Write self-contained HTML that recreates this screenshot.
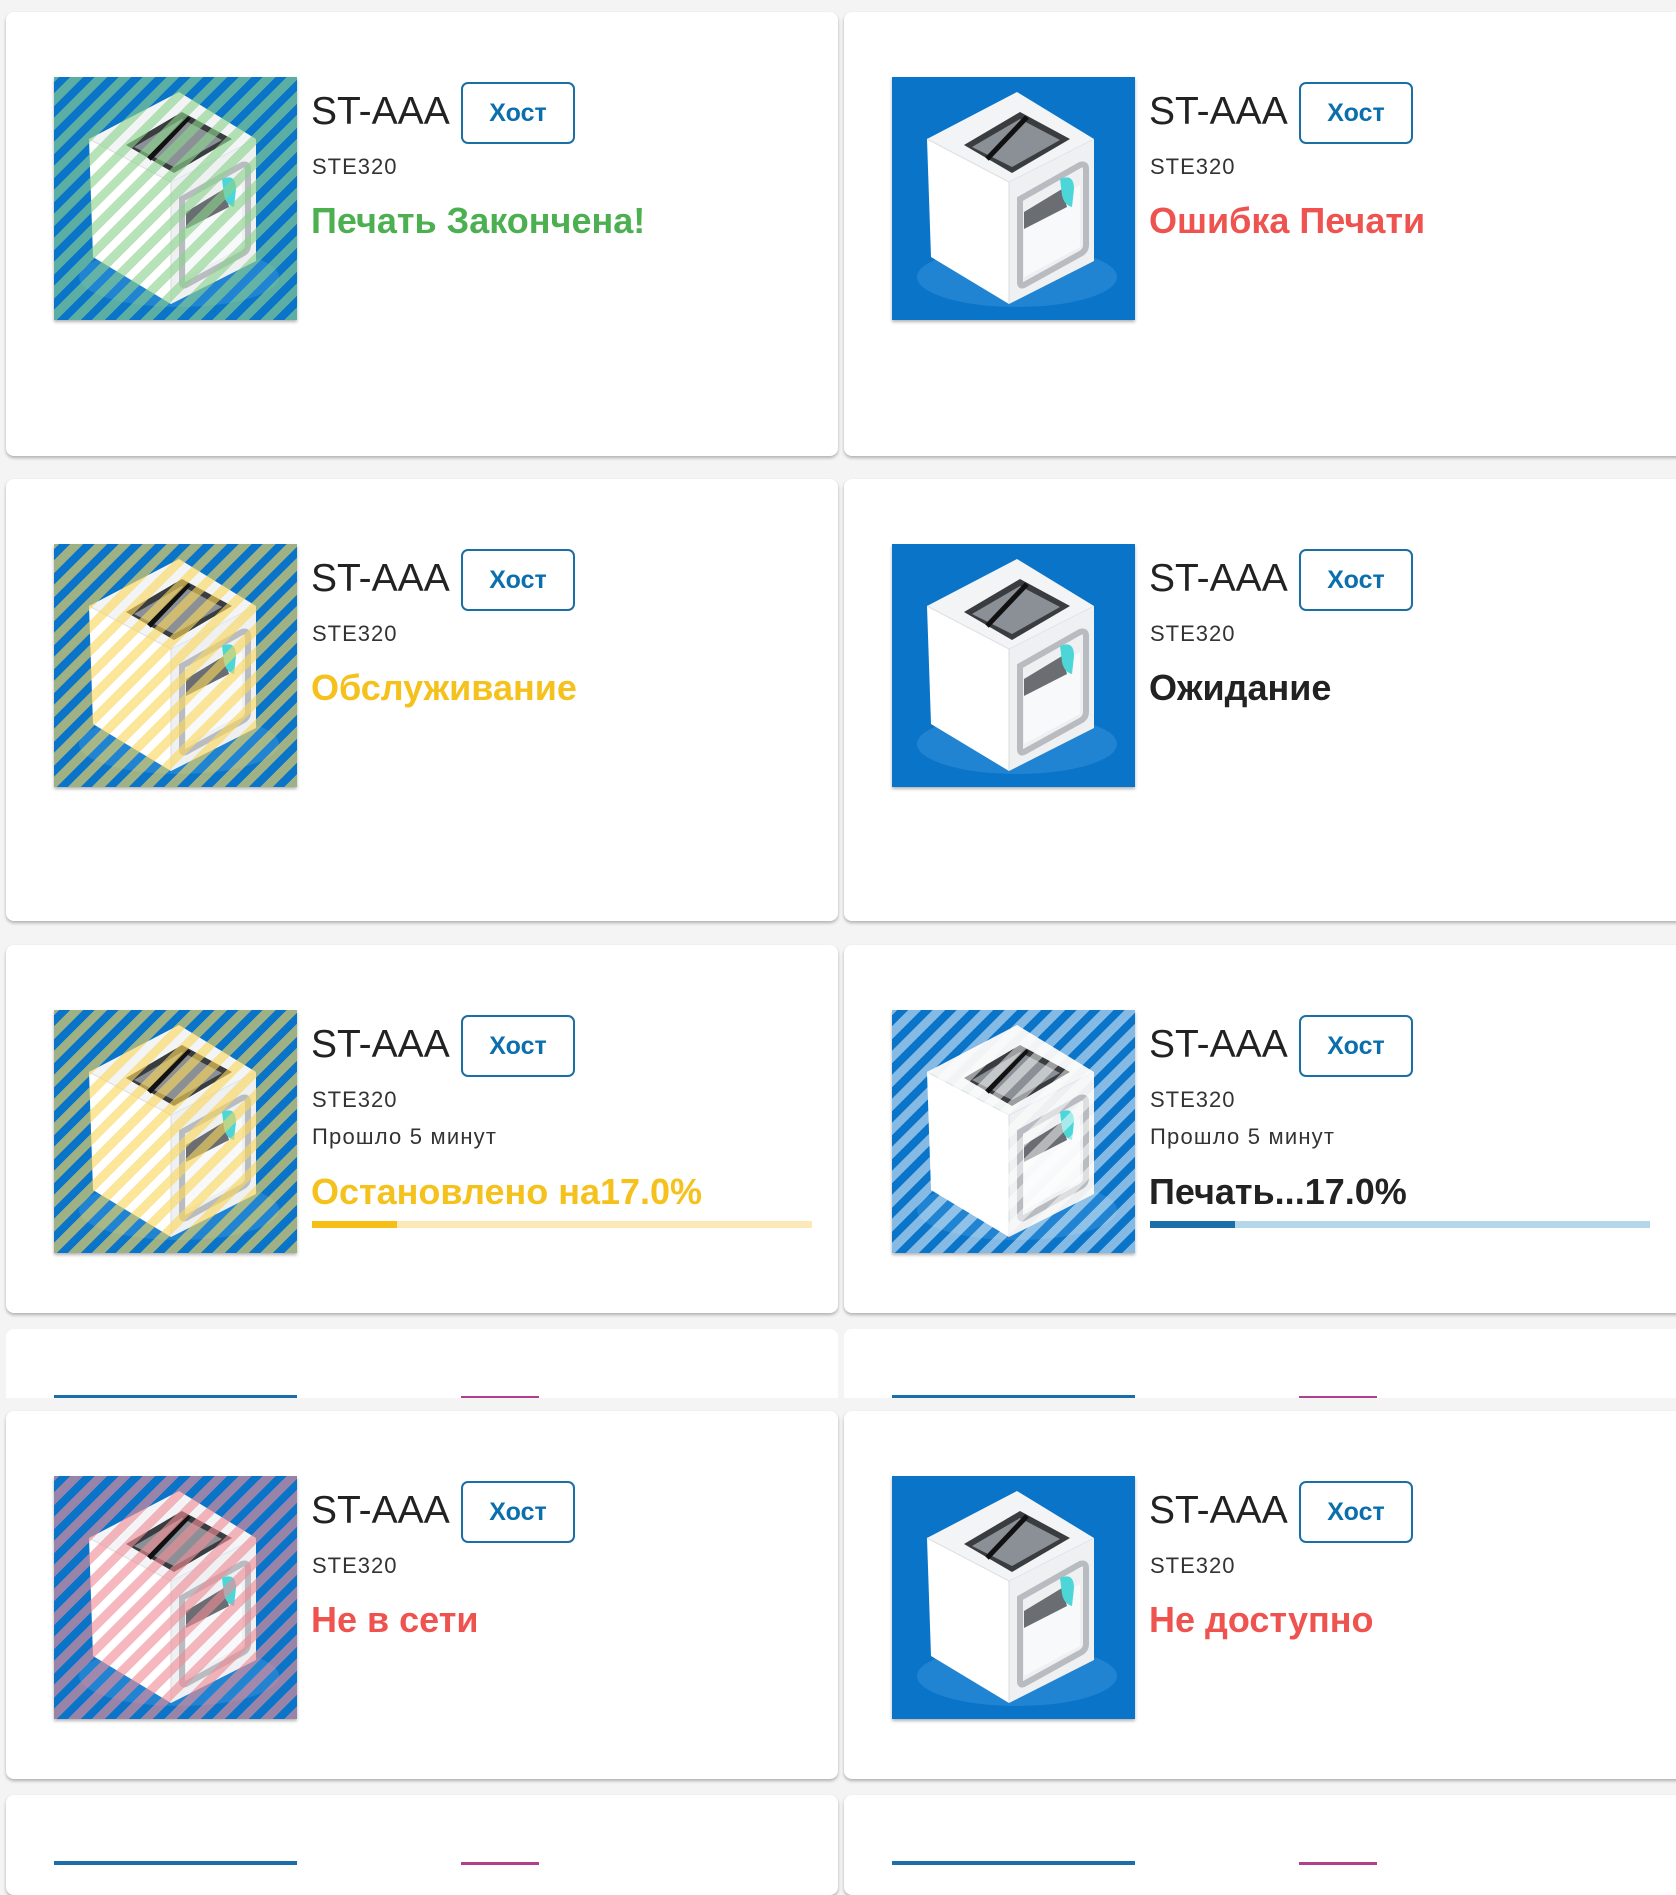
<!DOCTYPE html>
<html><head><meta charset="utf-8">
<style>
html,body{margin:0;padding:0;}
body{width:1676px;height:1864px;background:#f4f4f4;position:relative;overflow:hidden;font-family:"Liberation Sans","DejaVu Sans",sans-serif;}
.card{position:absolute;background:#fff;border-radius:8px;box-shadow:0 2px 3px rgba(0,0,0,.28);overflow:hidden;}
.L{left:6px;width:832px}
.R{left:844px;width:850px}
.img{position:absolute;left:48px;top:65px;width:243px;height:243px;box-shadow:0 2px 3px rgba(0,0,0,.3);overflow:hidden}
.img svg{display:block}
.ov{position:absolute;left:0;top:0;width:243px;height:243px}
.g{background:repeating-linear-gradient(-45deg,rgba(140,210,140,.62) 0 9px,transparent 9px 17px)}
.y{background:repeating-linear-gradient(-45deg,rgba(250,215,90,.62) 0 9px,transparent 9px 17px)}
.p{background:repeating-linear-gradient(-45deg,rgba(240,140,150,.62) 0 9px,transparent 9px 17px)}
.b{background:repeating-linear-gradient(-45deg,rgba(255,255,255,.5) 0 9px,transparent 9px 17px)}
.t{position:absolute;left:305px;top:80px;font-size:39px;line-height:39px;color:#222;white-space:nowrap}
.btn{position:absolute;left:455px;top:70px;width:110px;height:58px;border:2px solid #1c6fa3;border-radius:7px;color:#0b6fae;font-size:25px;line-height:58px;text-align:center;font-weight:bold}
.m{position:absolute;left:306px;top:144px;font-size:22px;line-height:22px;color:#333;letter-spacing:1px}
.e{position:absolute;left:306px;top:181px;font-size:22px;line-height:22px;color:#333;letter-spacing:1.2px}
.s{position:absolute;left:305px;top:191px;font-size:36px;line-height:36px;white-space:nowrap;font-weight:bold}
.s2{top:229px}
.bar{position:absolute;left:306px;top:276px;width:500px;height:7px}
</style></head><body>
<svg width="0" height="0" style="position:absolute">
<defs>
<symbol id="pr" viewBox="0 0 243 243">
<rect width="243" height="243" fill="#0a74c8"/>
<ellipse cx="125" cy="200" rx="100" ry="30" fill="#2f8fd8" opacity=".6"/>
<polygon points="35,62 125,15 202,62 117,105" fill="#f2f4f6"/>
<polygon points="35,62 117,105 117,227 39,180" fill="#ffffff"/>
<polygon points="117,105 202,62 202,184 117,227" fill="#eef0f2"/>
<polygon points="72,68 128,35 178,62 120,96" fill="#3a3d40"/>
<polygon points="80,70 128,42 168,63 120,90" fill="#8a9096"/>
<line x1="95" y1="82" x2="135" y2="40" stroke="#111" stroke-width="5"/>
<path d="M128,122 L188,88 Q194,86 194,92 L194,168 Q194,174 188,177 L132,208 Q128,210 128,205 Z" fill="none" stroke="#b8bcc0" stroke-width="6"/>
<path d="M132,140 L188,108 L188,170 L132,200 Z" fill="#f8f9fa"/>
<path d="M132,135 L170,112 L175,130 L132,152 Z" fill="#6a6e72"/>
<path d="M168,102 Q182,96 182,112 L180,130 Q172,128 170,118 Z" fill="#4dd6d8"/>
<line x1="35" y1="62" x2="117" y2="105" stroke="#dde0e3" stroke-width="1"/>
<line x1="117" y1="105" x2="117" y2="227" stroke="#d8dbde" stroke-width="1"/>
</symbol>
</defs>
</svg>

<div class="card L" style="top:12px;height:444px">
<div class="img"><svg width="243" height="243"><use href="#pr"/></svg><div class="ov g"></div></div>
<div class="t">ST-AAA</div><div class="btn">Хост</div><div class="m">STE320</div>
<div class="s" style="color:#4caf50">Печать Закончена!</div>
</div>
<div class="card R" style="top:12px;height:444px">
<div class="img"><svg width="243" height="243"><use href="#pr"/></svg></div>
<div class="t">ST-AAA</div><div class="btn">Хост</div><div class="m">STE320</div>
<div class="s" style="color:#ef5350">Ошибка Печати</div>
</div>

<div class="card L" style="top:479px;height:442px">
<div class="img"><svg width="243" height="243"><use href="#pr"/></svg><div class="ov y"></div></div>
<div class="t">ST-AAA</div><div class="btn">Хост</div><div class="m">STE320</div>
<div class="s" style="color:#f5c11c">Обслуживание</div>
</div>
<div class="card R" style="top:479px;height:442px">
<div class="img"><svg width="243" height="243"><use href="#pr"/></svg></div>
<div class="t">ST-AAA</div><div class="btn">Хост</div><div class="m">STE320</div>
<div class="s" style="color:#222">Ожидание</div>
</div>

<div class="card L" style="top:945px;height:368px">
<div class="img"><svg width="243" height="243"><use href="#pr"/></svg><div class="ov y"></div></div>
<div class="t">ST-AAA</div><div class="btn">Хост</div><div class="m">STE320</div>
<div class="e">Прошло 5 минут</div>
<div class="s s2" style="color:#f5c11c">Остановлено на17.0%</div>
<div class="bar" style="background:#fbeab8"><div style="width:85px;height:7px;background:#f5bf14"></div></div>
</div>
<div class="card R" style="top:945px;height:368px">
<div class="img"><svg width="243" height="243"><use href="#pr"/></svg><div class="ov b"></div></div>
<div class="t">ST-AAA</div><div class="btn">Хост</div><div class="m">STE320</div>
<div class="e">Прошло 5 минут</div>
<div class="s s2" style="color:#222">Печать...17.0%</div>
<div class="bar" style="background:#b5d5e8"><div style="width:85px;height:7px;background:#1b6ea8"></div></div>
</div>

<div class="card L" style="top:1329px;height:69px;border-radius:8px 8px 0 0;box-shadow:none">
<div style="position:absolute;left:48px;top:66px;width:243px;height:3px;background:#1b6ea8"></div>
<div style="position:absolute;left:455px;top:67px;width:78px;height:2px;background:#b0408e"></div>
</div>
<div class="card R" style="top:1329px;height:69px;border-radius:8px 8px 0 0;box-shadow:none">
<div style="position:absolute;left:48px;top:66px;width:243px;height:3px;background:#1b6ea8"></div>
<div style="position:absolute;left:455px;top:67px;width:78px;height:2px;background:#b0408e"></div>
</div>

<div class="card L" style="top:1411px;height:368px">
<div class="img"><svg width="243" height="243"><use href="#pr"/></svg><div class="ov p"></div></div>
<div class="t">ST-AAA</div><div class="btn">Хост</div><div class="m">STE320</div>
<div class="s" style="color:#ef5350">Не в сети</div>
</div>
<div class="card R" style="top:1411px;height:368px">
<div class="img"><svg width="243" height="243"><use href="#pr"/></svg></div>
<div class="t">ST-AAA</div><div class="btn">Хост</div><div class="m">STE320</div>
<div class="s" style="color:#ef5350">Не доступно</div>
</div>

<div class="card L" style="top:1795px;height:100px">
<div style="position:absolute;left:48px;top:66px;width:243px;height:4px;background:#1b6ea8"></div>
<div style="position:absolute;left:455px;top:67px;width:78px;height:3px;background:#b0408e"></div>
</div>
<div class="card R" style="top:1795px;height:100px">
<div style="position:absolute;left:48px;top:66px;width:243px;height:4px;background:#1b6ea8"></div>
<div style="position:absolute;left:455px;top:67px;width:78px;height:3px;background:#b0408e"></div>
</div>
</body></html>
